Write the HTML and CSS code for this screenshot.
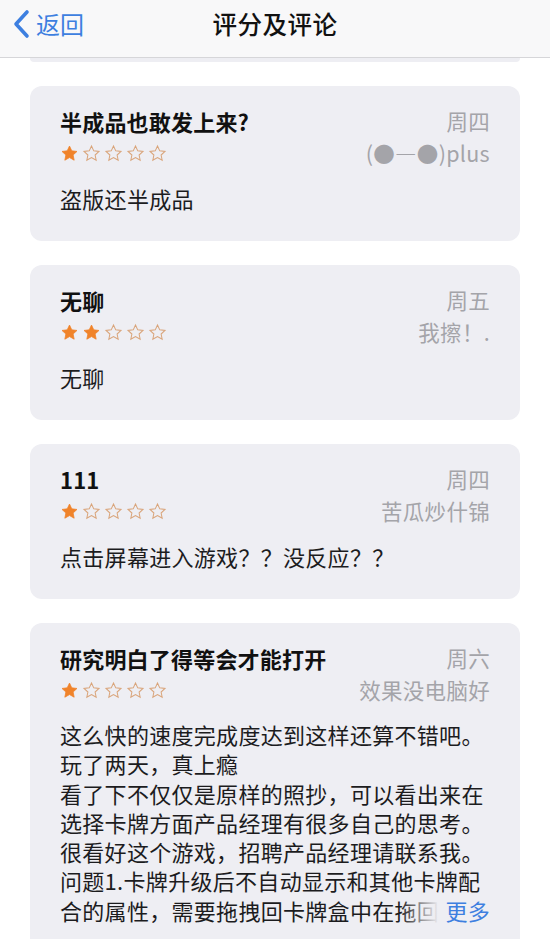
FILE: index.html
```html
<!DOCTYPE html>
<html lang="zh">
<head>
<meta charset="utf-8">
<link rel="stylesheet" href="styles.css">
</head>
<body>
<header class="nav">
  <a class="back">
    <svg class="chev" viewBox="0 0 18 30" width="18" height="30"><path d="M15 3 L4 15 L15 27" fill="none" stroke="#3d7fe0" stroke-width="3.6" stroke-linecap="round" stroke-linejoin="round"/></svg>
    <span>返回</span>
  </a>
  <h1 class="title">评分及评论</h1>
</header>
<svg width="0" height="0" class="defs">
  <defs>
    <path id="star" d="M12 2.6l2.85 6.05 6.6.75-4.9 4.5 1.35 6.55L12 17.15l-5.9 3.3 1.35-6.55-4.9-4.5 6.6-.75z"/>
  </defs>
</svg>
<main class="list">
  <div class="card-tail"></div>

  <section class="card">
    <div class="row">
      <h2 class="rtitle">半成品也敢发上来?</h2>
      <span class="meta">周四</span>
    </div>
    <div class="row">
      <div class="stars">
        <svg class="on" viewBox="0 0 24 24"><use href="#star"/></svg>
        <svg class="off" viewBox="0 0 24 24"><use href="#star"/></svg>
        <svg class="off" viewBox="0 0 24 24"><use href="#star"/></svg>
        <svg class="off" viewBox="0 0 24 24"><use href="#star"/></svg>
        <svg class="off" viewBox="0 0 24 24"><use href="#star"/></svg>
      </div>
      <span class="meta">(●—●)plus</span>
    </div>
    <p class="body">盗版还半成品</p>
  </section>

  <section class="card">
    <div class="row">
      <h2 class="rtitle">无聊</h2>
      <span class="meta">周五</span>
    </div>
    <div class="row">
      <div class="stars">
        <svg class="on" viewBox="0 0 24 24"><use href="#star"/></svg>
        <svg class="on" viewBox="0 0 24 24"><use href="#star"/></svg>
        <svg class="off" viewBox="0 0 24 24"><use href="#star"/></svg>
        <svg class="off" viewBox="0 0 24 24"><use href="#star"/></svg>
        <svg class="off" viewBox="0 0 24 24"><use href="#star"/></svg>
      </div>
      <span class="meta">我擦！.</span>
    </div>
    <p class="body">无聊</p>
  </section>

  <section class="card">
    <div class="row">
      <h2 class="rtitle">111</h2>
      <span class="meta">周四</span>
    </div>
    <div class="row">
      <div class="stars">
        <svg class="on" viewBox="0 0 24 24"><use href="#star"/></svg>
        <svg class="off" viewBox="0 0 24 24"><use href="#star"/></svg>
        <svg class="off" viewBox="0 0 24 24"><use href="#star"/></svg>
        <svg class="off" viewBox="0 0 24 24"><use href="#star"/></svg>
        <svg class="off" viewBox="0 0 24 24"><use href="#star"/></svg>
      </div>
      <span class="meta">苦瓜炒什锦</span>
    </div>
    <p class="body">点击屏幕进入游戏？？没反应？？</p>
  </section>

  <section class="card">
    <div class="row">
      <h2 class="rtitle">研究明白了得等会才能打开</h2>
      <span class="meta">周六</span>
    </div>
    <div class="row">
      <div class="stars">
        <svg class="on" viewBox="0 0 24 24"><use href="#star"/></svg>
        <svg class="off" viewBox="0 0 24 24"><use href="#star"/></svg>
        <svg class="off" viewBox="0 0 24 24"><use href="#star"/></svg>
        <svg class="off" viewBox="0 0 24 24"><use href="#star"/></svg>
        <svg class="off" viewBox="0 0 24 24"><use href="#star"/></svg>
      </div>
      <span class="meta">效果没电脑好</span>
    </div>
    <div class="clamp">
      <p class="body long">这么快的速度完成度达到这样还算不错吧。<br>玩了两天，真上瘾<br>看了下不仅仅是原样的照抄，可以看出来在选择卡牌方面产品经理有很多自己的思考。很看好这个游戏，招聘产品经理请联系我。<br>问题1.卡牌升级后不自动显示和其他卡牌配合的属性，需要拖拽回卡牌盒中在拖回卡组才能显示。</p>
      <span class="more">更多</span>
    </div>
  </section>
</main>
</body>
</html>
```

FILE: styles.css
```css
* { box-sizing: border-box; }
html, body { margin: 0; padding: 0; background: #ffffff; }
body {
  font-family: "Noto Sans CJK SC", "Noto Sans", sans-serif;
  color: #1c1c1e;
  width: 550px;
  height: 939px;
  overflow: hidden;
}
.defs { position: absolute; }

.nav {
  height: 58px;
  background: #f8f8f9;
  border-bottom: 1px solid #d6d6d9;
  display: flex;
  align-items: flex-start;
  justify-content: center;
  padding-top: 8px;
  position: relative;
}
.back {
  position: absolute;
  left: 12px;
  top: 9px;
  display: flex;
  align-items: center;
  gap: 6px;
  color: #3d7fe0;
  font-size: 24px;
  line-height: 30px;
}
.chev { display: block; }
.title {
  margin: 0;
  font-size: 24.5px;
  font-weight: 500;
  line-height: 32px;
  letter-spacing: 0.5px;
  color: #111;
}

.list {
  padding: 0 30px;
}
.card-tail {
  height: 4px;
  background: #eeeef3;
  border-radius: 0 0 12px 12px;
}
.card {
  background: #eeeef3;
  border-radius: 12px;
  margin-top: 24px;
  padding: 20px 30px 27px;
}
.row {
  display: flex;
  justify-content: space-between;
  align-items: center;
  height: 30px;
}
.row + .row { margin-top: 2px; }
.rtitle {
  margin: 0;
  font-size: 22px;
  font-weight: 700;
  line-height: 30px;
  letter-spacing: 0.2px;
  color: #111;
}
.meta {
  font-size: 21.5px;
  line-height: 30px;
  letter-spacing: 0.3px;
  color: #a4a4a9;
}
.stars {
  display: flex;
  gap: 3px;
}
.stars svg {
  width: 19px;
  height: 19px;
  display: block;
}
.stars .on { fill: #f0832a; stroke: #f0832a; stroke-width: 1; }
.stars .off { fill: none; stroke: #d9a47a; stroke-width: 1.3; }

.body {
  margin: 15px 0 0;
  font-size: 22px;
  letter-spacing: 0.3px;
  line-height: 31px;
  color: #1c1c1e;
}
.clamp {
  position: relative;
  margin-top: 15px;
  height: 203px;
  overflow: hidden;
}
.body.long {
  margin: 0;
  line-height: 29.3px;
}
.more {
  position: absolute;
  right: 0;
  top: 175.8px;
  font-size: 22px;
  letter-spacing: 0.3px;
  line-height: 29.3px;
  color: #3d7fe0;
  padding-left: 46px;
  background: linear-gradient(to right, rgba(238,238,243,0) 0, #eeeef3 40px);
}
```
